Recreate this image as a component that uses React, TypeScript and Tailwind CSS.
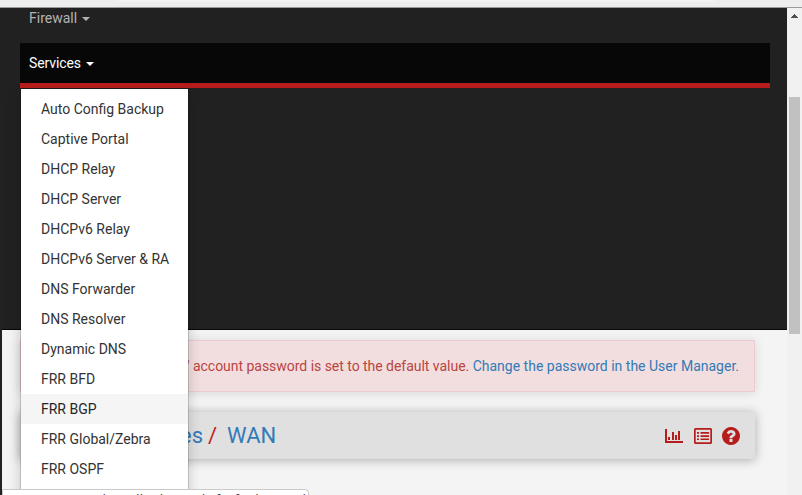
import React from "react";

const items = [
  "Auto Config Backup",
  "Captive Portal",
  "DHCP Relay",
  "DHCP Server",
  "DHCPv6 Relay",
  "DHCPv6 Server & RA",
  "DNS Forwarder",
  "DNS Resolver",
  "Dynamic DNS",
  "FRR BFD",
  "FRR BGP",
  "FRR Global/Zebra",
  "FRR OSPF",
];

function Caret() {
  return <span className="ml-[5px] inline-block border-x-4 border-t-4 border-x-transparent border-t-current align-middle" />;
}

function BarChart() {
  return (
    <svg className="mr-px" width="18" height="16" viewBox="0 0 18 16" fill="currentColor" shapeRendering="crispEdges">
      <path d="M0 1h2v12h16v2H0zM3 9h2v3H3zM7 4h2v8H7zM10 7h2v5h-2zM13 3h2v9h-2z" />
    </svg>
  );
}

function ListAlt() {
  return (
    <svg width="18" height="16" viewBox="0 0 18 16" fill="currentColor">
      <path fillRule="evenodd" d="M1.500 0h15Q18 0 18 1.500v13q0 1.500-1.500 1.500h-15Q0 16 0 14.500v-13Q0 0 1.500 0zM1.700 1.700v12.600h14.600V1.700z" />
      <path d="M3 4h2v1.700H3zM6.500 4H15v1.700H6.500zM3 7.200h2v1.700H3zM6.500 7.200H15v1.700H6.500zM3 10.400h2v1.700H3zM6.500 10.400H15v1.700H6.500z" />
    </svg>
  );
}

function Question() {
  return (
    <svg width="18" height="18" viewBox="0 0 1536 1536" fill="currentColor">
      <path d="M896 1248v-192q0-14-9-23t-23-9H672q-14 0-23 9t-9 23v192q0 14 9 23t23 9h192q14 0 23-9t9-23zm256-672q0-88-55.500-163T958 297t-170-41q-243 0-371 213-15 24 8 42l132 100q7 6 19 6 16 0 25-12 53-68 86-92 34-24 86-24 48 0 85.500 26t37.500 59q0 38-20 61t-68 45q-63 28-115.500 86.500T640 892v36q0 14 9 23t23 9h192q14 0 23-9t9-23q0-19 21.500-49.500T972 829q32-18 49-28.500t46-35 44.500-48 28-60.500 12.500-81zm384 192q0 209-103 385.500T1153.500 1433 768 1536t-385.500-103T103 1153.500 0 768t103-385.500T382.500 103 768 0t385.500 103T1433 382.500 1536 768z" />
    </svg>
  );
}

export default function App() {
  return (
    <div className="relative flex h-[495px] w-[802px] flex-col overflow-hidden bg-[#f4f4f4] font-[Roboto,sans-serif] text-sm leading-5">
      <div className="h-2 shrink-0 border-b border-[#999] bg-[#ededee] pl-[118px]">
        <div className="h-[2px] w-[596px] rounded-b bg-[#f1f3f4]" />
      </div>
      <div className="flex min-h-0 flex-1">
        <div className="w-0.5 shrink-0 bg-[#222]" />
        <main className="w-[785px] shrink-0">
          <nav className="h-[322px] border-b border-[#080808] bg-[#212121] pl-[18px] pr-[17px]">
            <div className="h-[35px] pl-[9px] text-[#b3b3b3]">Firewall<Caret /></div>
            <div className="h-[45px] border-b-[5px] border-[#b71c1c] bg-[#070707] pl-[9px] pt-[10px] text-white"><span className="tracking-[-0.12px]">Services</span><Caret /></div>
          </nav>
          <div className="ml-[18px] mt-[10px] flex h-[52px] w-[735px] items-center justify-end whitespace-pre border border-[#ebccd1] bg-[#f2dede] pr-[15px] text-[#b94442] shadow-[0_1px_10px_rgba(0,0,0,0.12)]">
            <span className="tracking-[-0.03px]">The &apos;admin&apos; account password is set to the default value. </span>
            <span className="text-[#337ab7]">Change the password in the User Manager.</span>
          </div>
          <header className="ml-[18px] mt-5 flex h-[47px] w-[735px] items-center justify-between bg-[#e0e0e0] pr-[15px] shadow-[0_1px_10px_rgba(0,0,0,0.3)]">
            <h1 className="flex pl-[83px] text-[22px] leading-6 text-[#337ab7]">
              <span className="w-[100px] text-right">Interfaces</span>
              <span className="ml-[5px] text-[#c31c1c]">/</span>
              <span className="ml-[10px]">WAN</span>
            </h1>
            <div className="flex items-center gap-[10px] text-[#b71c1c]">
              <BarChart /><ListAlt /><Question />
            </div>
          </header>
        </main>
        <aside className="flex w-[15px] shrink-0 flex-col items-center bg-[#f1f1f1]">
          <svg width="7" height="4" viewBox="0 0 7 4" className="mt-[6px] shrink-0" fill="#505050" shapeRendering="crispEdges"><path d="M3 0h1v1h1v1h1v1h1v1H0V3h1V2h1V1h1z" /></svg>
          <div className="mt-[79px] h-[237px] w-[11px] bg-[#c1c1c1]" />
        </aside>
      </div>
      <ul className="absolute left-[20px] top-[88px] h-[420px] w-[169px] border border-black/15 bg-white bg-clip-padding pt-[5px] text-[#333] shadow-[0_6px_12px_rgba(0,0,0,0.175)]">
        {items.map((item) => (
          <li key={item} className={item === "FRR BGP" ? "h-[30px] bg-[#f5f5f5] pl-5 pt-[5px] text-[#262626]" : "h-[30px] pl-5 pt-[5px]"}>{item}</li>
        ))}
      </ul>
      <div className="absolute left-0.5 top-[489px] flex h-6 w-[307px] justify-end whitespace-nowrap rounded-tr border border-[#c9c9c9] bg-white pr-[2px] pt-px font-['DejaVu_Sans',sans-serif] text-[12.5px] leading-[18px] text-[#444]">
        192.168.1.10/pkg_edit.php?xml=frr/frr_bgp.xml
      </div>
    </div>
  );
}
